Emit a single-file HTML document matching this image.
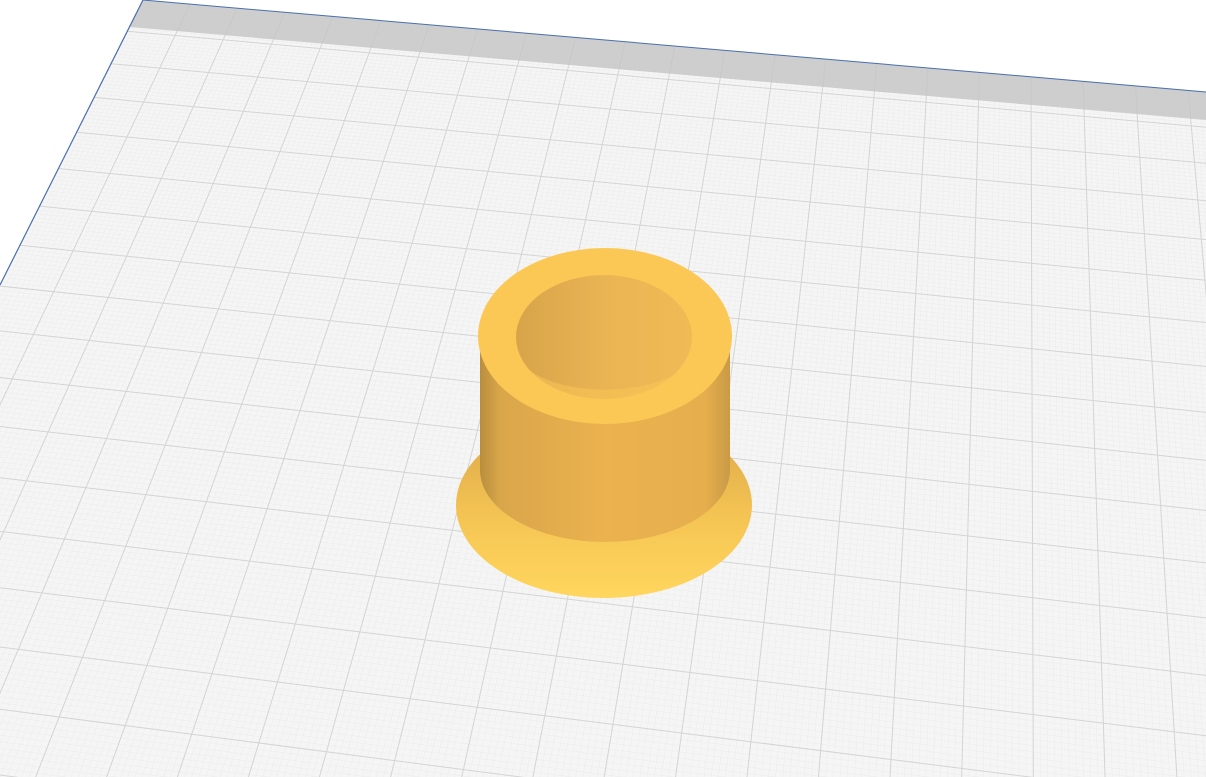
<!DOCTYPE html>
<html><head><style>html,body{margin:0;padding:0;background:#fff;width:1206px;height:777px;overflow:hidden}svg{display:block}</style></head>
<body>
<svg id="s" width="1206" height="777" viewBox="0 0 1206 777" xmlns="http://www.w3.org/2000/svg">
<defs>
<clipPath id="plate"><polygon points="143,0 1206,92 1206,777 0,777 0,285"/></clipPath>
<linearGradient id="body" x1="0" x2="1" y1="0" y2="0">
<stop offset="0" stop-color="#b88e3e"/><stop offset="0.08" stop-color="#d9a64a"/><stop offset="0.5" stop-color="#ebb24f"/><stop offset="0.9" stop-color="#e6ae4d"/><stop offset="1" stop-color="#c99a45"/>
</linearGradient>
<linearGradient id="fl" x1="0" x2="0" y1="0" y2="1">
<stop offset="0" stop-color="#d8a448"/><stop offset="0.6" stop-color="#f6c654"/><stop offset="1" stop-color="#ffd65e"/>
</linearGradient>
<linearGradient id="hole" x1="0" x2="1" y1="0" y2="0">
<stop offset="0" stop-color="#d7a44a"/><stop offset="0.5" stop-color="#e9b453"/><stop offset="1" stop-color="#f0bb55"/>
</linearGradient>
</defs>
<polygon points="143,0 1206,92 1206,777 0,777 0,285" fill="#f5f5f5"/>
<g id="grid" clip-path="url(#plate)"></g>
<polygon points="143,0 1206,92 1206,120 130,27" fill="#c4c4c4" opacity="0.8"/>
<line x1="143" y1="0" x2="1206" y2="92" stroke="#4a6fb0" stroke-width="1"/>
<line x1="143" y1="0" x2="0" y2="285" stroke="#4a6fb0" stroke-width="1.2"/>
<ellipse cx="604" cy="505" rx="148" ry="93" fill="url(#fl)"/>
<path d="M480 335 L480 470 A125 72 0 0 0 730 470 L730 335 Z" fill="url(#body)"/>
<ellipse cx="605" cy="336" rx="127" ry="88" fill="#fcc855"/>
<ellipse cx="604" cy="337" rx="88" ry="62" fill="url(#hole)"/>
<path d="M520 360 A88 62 0 0 0 690 360 A88 40 0 0 1 520 360Z" fill="#fcc855" opacity="0.5"/>
</svg>
<script>
(function(){
var a=-0.002771,b=-0.0175,V2x=-16773,V2y=-1471,V1x=1025,V1y=-1757;
function P(u,v){var w=a*u+b*v+1;return [(a*V2x*u+b*V1x*v+143)/w,(a*V2y*u+b*V1y*v)/w];}
var g=document.getElementById('grid'),h='';
function ln(p,q,c,sw){h+='<line x1="'+p[0].toFixed(1)+'" y1="'+p[1].toFixed(1)+'" x2="'+q[0].toFixed(1)+'" y2="'+q[1].toFixed(1)+'" stroke="'+c+'" stroke-width="'+sw+'"/>';}
for(var i=0;i<=300;i++){var t=i/10;if(i%10)ln(P(t,0),P(t,40),'#ececec',0.5);}
for(var i=0;i<=400;i++){var t=i/10;if(i%10)ln(P(0,t),P(30,t),'#ececec',0.5);}
for(var i=0;i<=30;i++)ln(P(i,0),P(i,40),'#d4d4d4',1);
for(var i=0;i<=40;i++)ln(P(0,i),P(30,i),'#d4d4d4',1);
g.innerHTML=h;
})();
</script>
</body></html>
